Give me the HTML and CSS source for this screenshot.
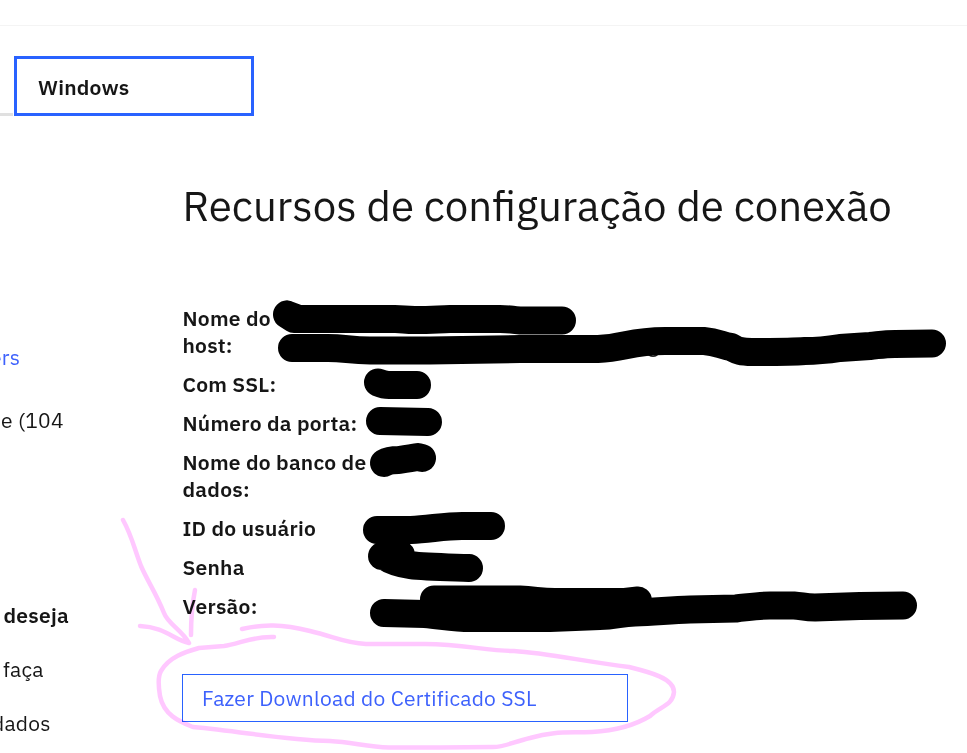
FILE: index.html
```
<!DOCTYPE html>
<html lang="pt-BR">
<head>
<meta charset="utf-8">
<title>Recursos de configuração de conexão</title>
<link rel="stylesheet" href="styles.css">
</head>
<body>
<div class="page">
  <header class="topbar"></header>
  <nav class="tabs">
    <span class="tab-rest"></span>
    <a class="tab">Windows</a>
  </nav>
  <div class="columns">
    <aside class="side">
      <p class="drivers"><a class="link">ers</a></p>
      <p class="size">te (104</p>
      <p class="question">deseja</p>
      <p class="step">faça</p>
      <p class="data">dados</p>
    </aside>
    <main class="content">
      <h1 class="title">Recursos de configuração de conexão</h1>
      <ul class="fields">
        <li>Nome do<br>host:</li>
        <li>Com SSL:</li>
        <li>Número da porta:</li>
        <li>Nome do banco de<br>dados:</li>
        <li>ID do usuário</li>
        <li>Senha</li>
        <li>Versão:</li>
      </ul>
      <a class="download">Fazer Download do Certificado SSL</a>
    </main>
  </div>
  <svg class="ink" viewBox="0 0 967 753" aria-hidden="true">
    <path class="speck" d="M649 355Q653 357.500 657 355"/>
    <g class="redact">
      <path d="M287 314.500L299 319M287 314.500L294 319H395C404 319 404 320 415 320C430 320 435 319.500 450 319H500C512 319 510 320 520 320.500H562"/>
      <path d="M292 348H328C345 348 350 350.500 370 350.500H430L520 349H598C625 348 630 341 665 341H704C718 342 722 346 731 347C737 350 739 352 752 352C770 352 790 352 805 351C820 351 827 350 840 348L870 346C880 345 885 344 895 344L932 343.500"/>
      <path d="M378 382.500Q384 385 389 385H417"/>
      <path d="M380 421L428 422"/>
      <path d="M384 463Q389 460 399 460Q412 458 418 457L422 458"/>
      <path d="M377 530H411C430 529 445 526 462 526H491"/>
      <path d="M382 556L401 555M384 556C400 567 420 566.500 469 568"/>
      <path d="M384 613L425 614C445 616 455 618 470 618H550L600 616C615 616 620 613 635 612.500C655 612 670 610 690 609.500L736 608.500C750 607 760 605.500 770 605.500H794C802 606 805 607.500 815 607.500L860 606L903 605.500"/>
      <path d="M434 599.500H520C535 600 540 602 555 602H625L638 600.500"/>
    </g>
    <g class="marker">
      <path d="M123 520C132 536 134 548 141 566C148 582 156 593 164 613C168 624 182 630 189 643C174 640 165 627 140 626"/>
      <path d="M195 590C192 605 191 618 191 635"/>
      <path d="M242 629C263 624 282 624 310 631C335 637 345 643 366 644H425C464 644 485 651 514 651C546 653 582 661 629 667C649 672 674 678 674 692C673 705 661 706 650 716C632 727 609 731 592 732C566 733 555 731 530 738C513 742 505 747 493 747L440 747.500H389C367 747 352 742 330 741C285 740 246 732 193 727C181 722 164 716 160 696C158 684 158 676 161 671C169 657 185 652 199 648L224 646C239 644 253 636 274 637"/>
    </g>
  </svg>
</div>
</body>
</html>
```
FILE: styles.css
```
* { box-sizing: border-box; }
body {
  margin: 0;
  background: #fff;
  color: #161616;
  font: 400 21px/27px "IBM Plex Sans", Roboto, "Liberation Sans", sans-serif;
  letter-spacing: 0.24px;
}
.page {
  position: relative;
  width: 967px;
  height: 753px;
  overflow: hidden;
}
.topbar { height: 26px; border-bottom: 1px solid #f4f4f4; }
.tabs {
  display: flex;
  align-items: flex-end;
  gap: 1px;
  margin-top: 30px;
}
.tab-rest { width: 13px; height: 3px; background: #e0e0e0; }
.tab {
  display: flex;
  align-items: center;
  width: 240px;
  height: 60px;
  padding: 2px 0 0 21px;
  border: 3px solid #2962ff;
  font-weight: 600;
}
.columns { display: grid; grid-template-columns: 182.5px 1fr; }
.side { padding-top: 228px; white-space: nowrap; }
.side p { margin: 0; }
.link { color: #3d61fc; }
.side .drivers { margin-left: -10px; }
.side .size { margin: 36px 0 0 -6.5px; }
.side .question { margin: 168px 0 0 3.5px; font-weight: 600; }
.side .step { margin: 27px 0 0 3px; }
.side .data { margin: 27px 0 0 -8px; }
.title {
  margin: 62px 0 0;
  font-size: 42px;
  font-weight: 400;
  line-height: 56px;
  letter-spacing: 0;
  white-space: nowrap;
}
.fields {
  display: grid;
  gap: 12px;
  margin: 71px 0 0;
  padding: 0;
  list-style: none;
  font-weight: 600;
}
.download {
  display: flex;
  align-items: center;
  width: 446px;
  height: 48px;
  margin: 54px 0 0 -0.5px;
  padding: 0 0 0 19px;
  border: 1px solid #2962ff;
  color: #3d61fc;
}
.ink { position: absolute; inset: 0; width: 967px; height: 753px; mix-blend-mode: multiply; }
.ink path { fill: none; stroke-linecap: round; stroke-linejoin: round; }
.redact { stroke: #000; stroke-width: 28px; }
.marker { stroke: #ffc8ff; stroke-width: 4.5px; filter: blur(0.5px); }
.speck { stroke: #222; stroke-width: 1.5px; }
```
